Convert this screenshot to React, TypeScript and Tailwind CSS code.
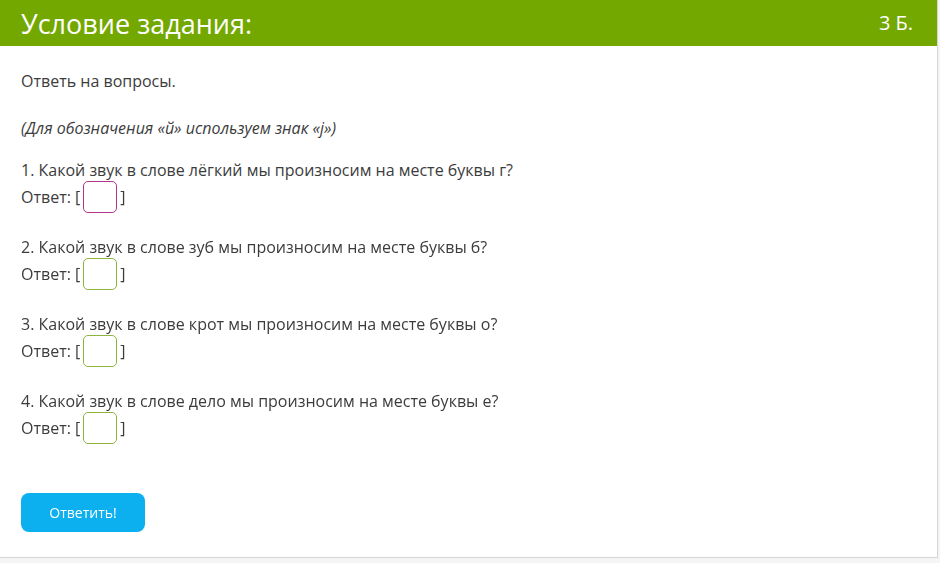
import { useState } from 'react';

const questions = [
  'Какой звук в слове лёгкий мы произносим на месте буквы г?',
  'Какой звук в слове зуб мы произносим на месте буквы б?',
  'Какой звук в слове крот мы произносим на месте буквы о?',
  'Какой звук в слове дело мы произносим на месте буквы е?',
];

const App = () => {
  const [answers, setAnswers] = useState<string[]>(['', '', '', '']);

  return (
    <div className="min-h-[563px] bg-[#f5f5f5]" style={{ fontFamily: '"Open Sans", sans-serif' }}>
      <div className="w-[938px] bg-white border-r border-b border-[#d6d6d6]">
        <div className="h-[46px] bg-[#73a800] flex items-center justify-between pl-[21px] pr-[24px] text-white">
          <h1 className="text-[27px] leading-none">Условие задания:</h1>
          <span className="text-[20px] leading-none">3 Б.</span>
        </div>

        <div className="px-[21px] pt-[24px] pb-[25px] text-[16px] leading-[22px] text-[#3c3c3c]">
          <p>Ответь на вопросы.</p>
          <p className="italic mt-[25px]">(Для обозначения «й» используем знак «j»)</p>

          {questions.map((q, i) => (
            <div key={i} className={i === 0 ? 'mt-[20px]' : 'mt-[23px]'}>
              <p>{i + 1}. {q}</p>
              <div className="flex items-center h-[32px]">
                <span>Ответ: [</span>
                <input
                  autoFocus={i === 0}
                  value={answers[i]}
                  onChange={e => setAnswers(a => a.map((v, j) => (j === i ? e.target.value : v)))}
                  className={`w-[34px] h-[32px] mx-[3px] rounded-[5px] border px-[5px] outline-none text-[16px] caret-[#333] ${
                    i === 0 ? 'border-[#b0358a]' : 'border-[#8db53f]'
                  }`}
                />
                <span>]</span>
              </div>
            </div>
          ))}

          <button className="mt-[49px] w-[124px] h-[39px] rounded-[8px] bg-[#0cb0ef] text-white text-[14px] block">
            Ответить!
          </button>
        </div>
      </div>
    </div>
  );
};

export default App;
